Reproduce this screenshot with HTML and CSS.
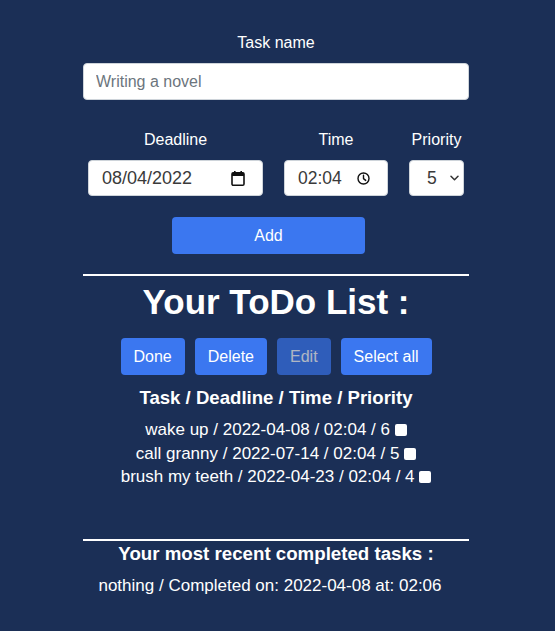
FILE: index.html
```html
<!DOCTYPE html>
<html lang="en">
<head>
<meta charset="utf-8">
<title>ToDo</title>
<link rel="stylesheet" href="styles.css">
</head>
<body>
<main class="app">
  <form class="task-form">
    <label class="label label-name" for="name">Task name</label>
    <input id="name" class="field field-name" type="text" placeholder="Writing a novel">
    <div class="form-row">
      <div class="group">
        <span class="label">Deadline</span>
        <div class="field field-date">
          <span>08/04/2022</span>
          <svg class="ico" width="14" height="15" viewBox="0 0 14 15"><rect x="1" y="1.8" width="12" height="12.4" rx="1.3" fill="none" stroke="#111" stroke-width="1.6"/><rect x="1" y="1.8" width="12" height="3.2" fill="#111"/><rect x="3" y="0" width="1.6" height="2.5" fill="#111"/><rect x="9.4" y="0" width="1.6" height="2.5" fill="#111"/></svg>
        </div>
      </div>
      <div class="group">
        <span class="label">Time</span>
        <div class="field field-time">
          <span>02:04</span>
          <svg class="ico" width="13" height="13" viewBox="0 0 13 13"><circle cx="6.5" cy="6.5" r="5.5" fill="none" stroke="#111" stroke-width="1.4"/><path d="M6.5 3.3V6.6l2.2 1.8" fill="none" stroke="#111" stroke-width="1.4" stroke-linecap="round" stroke-linejoin="round"/></svg>
        </div>
      </div>
      <div class="group">
        <span class="label">Priority</span>
        <div class="field field-select">
          <span>5</span>
          <svg width="9" height="6" viewBox="0 0 9 6"><path d="M1 1.2l3.5 3.5 3.5-3.5" fill="none" stroke="#333" stroke-width="1.5" stroke-linecap="round" stroke-linejoin="round"/></svg>
        </div>
      </div>
    </div>
    <button type="button" class="btn btn-add">Add</button>
  </form>

  <hr class="rule">
  <h1 class="title">Your ToDo List :</h1>
  <div class="actions">
    <button type="button" class="btn">Done</button>
    <button type="button" class="btn">Delete</button>
    <button type="button" class="btn btn-disabled">Edit</button>
    <button type="button" class="btn">Select all</button>
  </div>
  <h2 class="list-head">Task / Deadline / Time / Priority</h2>
  <ul class="list">
    <li>wake up / 2022-04-08 / 02:04 / 6 <span class="check"></span></li>
    <li>call granny / 2022-07-14 / 02:04 / 5 <span class="check"></span></li>
    <li>brush my teeth / 2022-04-23 / 02:04 / 4 <span class="check"></span></li>
  </ul>

  <hr class="rule rule-bottom">
  <h3 class="recent-head">Your most recent completed tasks :</h3>
  <p class="recent">nothing / Completed on: 2022-04-08 at: 02:06</p>
</main>
</body>
</html>
```
FILE: styles.css
```css
* { box-sizing: border-box; }
html, body { margin: 0; padding: 0; }
body {
  background: #1b2f56;
  color: #fff;
  font-family: "Liberation Sans", Arial, sans-serif;
  height: 631px;
}
.app {
  margin: 0 86px 0 83px;
  padding-top: 33px;
  text-align: center;
}
.task-form {
  display: flex;
  flex-direction: column;
  align-items: center;
}
.label {
  display: block;
  font-size: 16px;
  line-height: 19px;
  color: #fff;
}
.label-name { margin-bottom: 11px; }
.field {
  background: #fff;
  border: 1px solid #ced4da;
  border-radius: 4px;
  color: #3a3a3a;
  font-family: inherit;
  font-size: 16px;
}
.field-name {
  width: 386px;
  height: 37px;
  padding: 0 12px;
  outline: none;
}
.field-name::placeholder { color: #6c757d; }
.form-row {
  display: flex;
  gap: 21px;
  margin-top: 30px;
  justify-content: center;
}
.group {
  display: flex;
  flex-direction: column;
  align-items: center;
  gap: 11px;
}
.field-date, .field-time, .field-select {
  height: 36px;
  display: flex;
  align-items: center;
  justify-content: space-between;
}
.field-date { width: 175px; padding: 0 17px 0 13px; font-size: 18px; }
.field-time { width: 104px; padding: 0 17px 0 13px; font-size: 17.5px; }
.field-select { width: 55px; padding: 0 4px 0 17px; font-size: 17.5px; }
.btn-add {
  width: 193px;
  margin-top: 21px;
  margin-right: 15px;
}
.btn {
  background: #3b77f0;
  color: #fff;
  border: none;
  border-radius: 4px;
  font-family: inherit;
  font-size: 16px;
  height: 37px;
  padding: 0 13px;
}
.btn-disabled { opacity: 0.65; }
.rule {
  border: none;
  height: 2px;
  background: #fff;
  margin: 20px 0 0;
}
.title {
  font-size: 35px;
  line-height: 42px;
  font-weight: bold;
  margin: 5px 0 0;
}
.actions {
  display: flex;
  justify-content: center;
  gap: 10px;
  margin-top: 15px;
}
.list-head {
  font-size: 18.6px;
  line-height: 24px;
  font-weight: bold;
  margin: 11px 0 0;
}
.list {
  list-style: none;
  margin: 8px 0 0;
  padding: 0;
  font-size: 17px;
  line-height: 23.5px;
}
.check {
  display: inline-block;
  width: 12px;
  height: 12px;
  background: #fff;
  border-radius: 2px;
  vertical-align: -1px;
}
.rule-bottom { margin-top: 50px; }
.recent-head {
  font-size: 18.7px;
  line-height: 22px;
  font-weight: bold;
  margin: 2px 0 0;
}
.recent {
  font-size: 17px;
  line-height: 19px;
  margin: 11px 0 0;
  padding-right: 12px;
}
```
